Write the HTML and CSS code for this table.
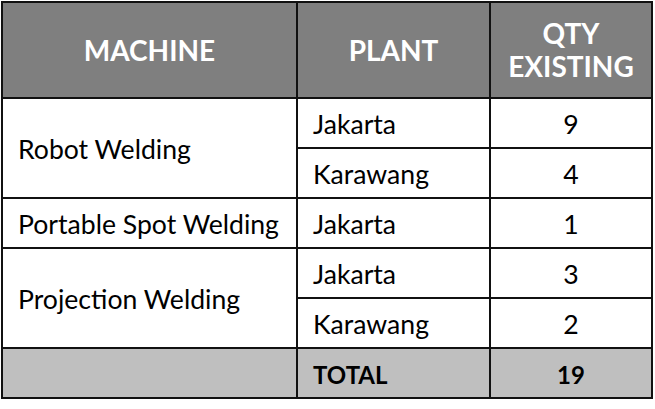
FILE: index.html
```html
<!DOCTYPE html>
<html>
<head>
<meta charset="utf-8">
<link rel="stylesheet" href="styles.css">
</head>
<body>
<div class="grid">
  <div class="cell head">MACHINE</div>
  <div class="cell head">PLANT</div>
  <div class="cell head qty-head">QTY<br>EXISTING</div>

  <div class="cell machine span2">Robot Welding</div>
  <div class="cell plant">Jakarta</div>
  <div class="cell num">9</div>
  <div class="cell plant">Karawang</div>
  <div class="cell num">4</div>

  <div class="cell machine">Portable Spot Welding</div>
  <div class="cell plant">Jakarta</div>
  <div class="cell num">1</div>

  <div class="cell machine span2">Projection Welding</div>
  <div class="cell plant">Jakarta</div>
  <div class="cell num">3</div>
  <div class="cell plant">Karawang</div>
  <div class="cell num">2</div>

  <div class="cell total"></div>
  <div class="cell total plant bold">TOTAL</div>
  <div class="cell total num bold">19</div>
</div>
</body>
</html>
```

FILE: styles.css
```css
html, body {
  margin: 0;
  padding: 0;
  background: #ffffff;
}

body {
  padding: 1px 0 0 1px;
  font-family: "Lato", "Liberation Sans", sans-serif;
  color: #000;
}

.grid {
  display: grid;
  grid-template-columns: 293px 191px 160px;
  grid-template-rows: 94px repeat(6, 48px);
  gap: 2px;
  padding: 2px;
  background: #111;
  width: 648px;
}

.cell {
  background: #fff;
  display: flex;
  align-items: center;
  font-size: 26.6px;
  padding-top: 2px;
}

.head {
  background: #7f7f7f;
  color: #fff;
  font-weight: 700;
  font-size: 28px;
  justify-content: center;
  text-align: center;
  line-height: 33px;
  padding-top: 0;
}

.machine {
  padding-left: 15px;
}

.span2 {
  grid-row: span 2;
}

.plant {
  padding-left: 15px;
}

.num {
  justify-content: center;
}

.total {
  background: #bfbfbf;
}

.bold {
  font-weight: 700;
  font-size: 24px;
}
```
